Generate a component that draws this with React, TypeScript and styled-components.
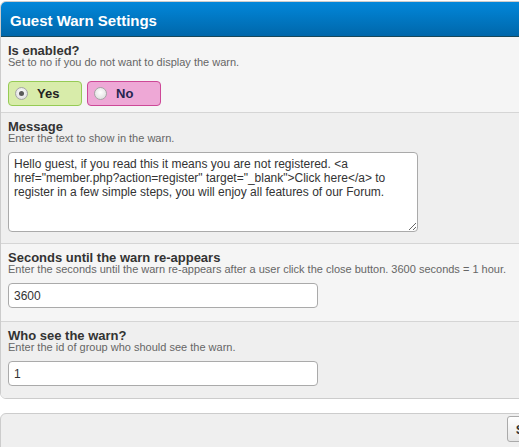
import React from 'react';
import styled, { createGlobalStyle } from 'styled-components';

const GlobalStyle = createGlobalStyle`
  html, body {
    margin: 0;
    padding: 0;
    background: #fff;
    overflow: hidden;
  }
  body {
    font-family: Tahoma, "Liberation Sans", Arial, sans-serif;
    color: #333;
  }
`;

// the settings page is wider than the visible frame; the button row is centred in it
const Page = styled.div`
  width: 1117px;
  padding-top: 1px;
`;

const Panel = styled.div`
  border: 1px solid #ccc;
  border-radius: 6px;
  overflow: hidden;
`;

const Header = styled.div`
  height: 35px;
  box-sizing: border-box;
  display: flex;
  align-items: center;
  padding: 2px 0 0 9px;
  background: linear-gradient(to bottom, #0287da 0%, #0067aa 100%);
  border-bottom: 1px solid #17485a;
  color: #fff;
  font-size: 15px;
  font-weight: bold;
`;

const Row = styled.div<{ $alt?: boolean; $last?: boolean }>`
  padding: 8px 7px 0;
  background: ${(p) => (p.$alt ? '#efefef' : '#f5f5f5')};
  border-bottom: ${(p) => (p.$last ? 'none' : '1px solid #d5d5d5')};
`;

const Label = styled.div`
  font-size: 13px;
  font-weight: bold;
  line-height: 12px;
  color: #333;
`;

const Desc = styled.div`
  font-size: 11px;
  line-height: 11px;
  color: #666;
  white-space: nowrap;
`;

const Control = styled.div<{ $top?: number; $bottom?: number }>`
  margin-top: ${(p) => p.$top ?? 8}px;
  padding-bottom: ${(p) => p.$bottom ?? 0}px;
`;

const RadioGroup = styled.div`
  display: flex;
  gap: 5px;
`;

const RadioBox = styled.label<{ $bg: string; $border: string; $color: string }>`
  box-sizing: border-box;
  width: 74px;
  height: 25px;
  display: flex;
  align-items: center;
  padding-left: 6px;
  gap: 9px;
  background: ${(p) => p.$bg};
  border: 1px solid ${(p) => p.$border};
  border-radius: 4px;
  font-size: 13px;
  font-weight: bold;
  color: ${(p) => p.$color};
`;

const RadioDot = styled.span<{ $checked?: boolean }>`
  box-sizing: border-box;
  width: 13px;
  height: 13px;
  border-radius: 50%;
  border: 1px solid #a5a5a5;
  background: radial-gradient(circle at 50% 40%, #ffffff 0%, #d8d8d8 100%);
  display: flex;
  align-items: center;
  justify-content: center;

  &::after {
    content: '';
    display: ${(p) => (p.$checked ? 'block' : 'none')};
    width: 5px;
    height: 5px;
    border-radius: 50%;
    background: #5a5a5a;
  }
`;

const TextArea = styled.textarea`
  display: block;
  box-sizing: border-box;
  width: 410px;
  height: 80px;
  margin: 0;
  padding: 4px 5px;
  border: 1px solid #aaa;
  border-radius: 4px;
  background: #fff;
  font-family: inherit;
  font-size: 12px;
  line-height: 14px;
  color: #333;
  resize: vertical;
  outline: none;
`;

const TextInput = styled.input`
  display: block;
  box-sizing: border-box;
  width: 310px;
  height: 25px;
  margin: 0;
  padding: 2px 5px;
  border: 1px solid #aaa;
  border-radius: 4px;
  background: #fff;
  font-family: inherit;
  font-size: 12px;
  color: #333;
  outline: none;
`;

const SubmitBar = styled.div`
  margin-top: 14px;
  display: flex;
  justify-content: center;
  height: 40px;
  padding-top: 2px;
  background: #efefef;
  border: 1px solid #ccc;
  border-radius: 6px;
`;

const SubmitButton = styled.button`
  box-sizing: border-box;
  height: 26px;
  padding: 0 8px;
  border: 1px solid #aaa;
  border-radius: 3px;
  background: linear-gradient(to bottom, #fff 0%, #e6e6e6 100%);
  font-family: inherit;
  font-size: 13px;
  font-weight: bold;
  color: #333;
`;

const message =
  'Hello guest, if you read this it means you are not registered. <a href="member.php?action=register" target="_blank">Click here</a> to register in a few simple steps, you will enjoy all features of our Forum.';

export default function App() {
  return (
    <Page>
      <GlobalStyle />
      <Panel>
        <Header>Guest Warn Settings</Header>
        <Row>
          <Label>Is enabled?</Label>
          <Desc>Set to no if you do not want to display the warn.</Desc>
          <Control $top={13} $bottom={6}>
            <RadioGroup>
              <RadioBox $bg="#d8ecaa" $border="#96cb55" $color="#222">
                <RadioDot $checked />
                Yes
              </RadioBox>
              <RadioBox $bg="#eea8d6" $border="#cd4897" $color="#262650">
                <RadioDot />
                No
              </RadioBox>
            </RadioGroup>
          </Control>
        </Row>
        <Row $alt>
          <Label>Message</Label>
          <Desc>Enter the text to show in the warn.</Desc>
          <Control $bottom={11}>
            <TextArea defaultValue={message} />
          </Control>
        </Row>
        <Row>
          <Label>Seconds until the warn re-appears</Label>
          <Desc>
            Enter the seconds until the warn re-appears after a user click the close button. 3600
            seconds = 1 hour.
          </Desc>
          <Control $bottom={13}>
            <TextInput defaultValue="3600" />
          </Control>
        </Row>
        <Row $alt $last>
          <Label>Who see the warn?</Label>
          <Desc>Enter the id of group who should see the warn.</Desc>
          <Control $bottom={12}>
            <TextInput defaultValue="1" />
          </Control>
        </Row>
      </Panel>
      <SubmitBar>
        <SubmitButton>Save Settings</SubmitButton>
      </SubmitBar>
    </Page>
  );
}
